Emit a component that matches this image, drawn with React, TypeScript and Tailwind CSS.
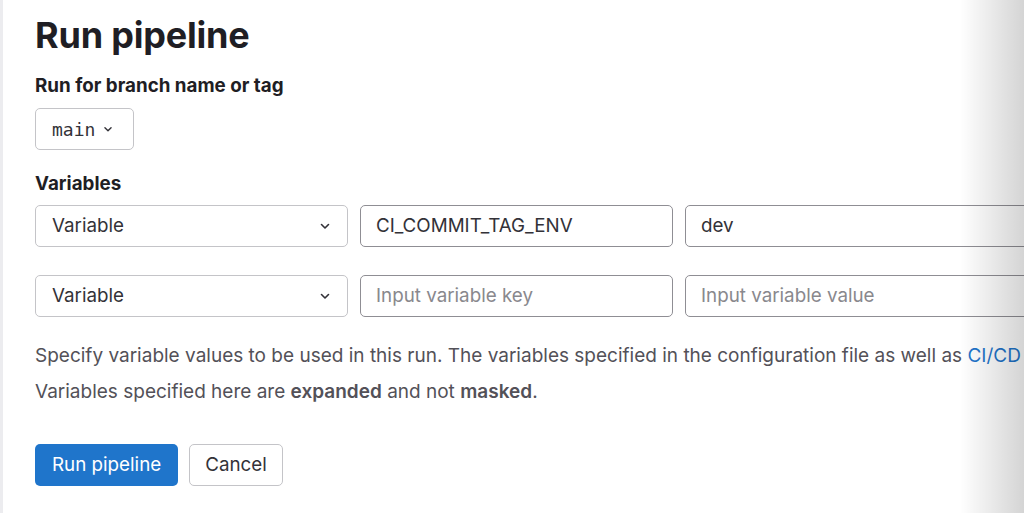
import React from "react";

function Chevron({ className = "" }: { className?: string }) {
  return (
    <svg viewBox="0 0 16 16" className={className} fill="none">
      <path d="M4.5 6.5 8 10l3.5-3.5" stroke="currentColor" strokeWidth="1.6" strokeLinecap="round" strokeLinejoin="round" />
    </svg>
  );
}

function VarRow({ keyText, valueText }: { keyText?: string; valueText?: string }) {
  return (
    <div className="flex gap-[12px]">
      <div className="w-[313px] h-[42px] shrink-0 rounded-[5px] border border-[#c4c4c8] flex items-center justify-between pl-[16px] pr-[14px] text-[18.8px] text-[#333238]">
        <span>Variable</span>
        <Chevron className="w-[16px] h-[16px] text-[#333238]" />
      </div>
      <div className="w-[313px] h-[42px] shrink-0 rounded-[5px] border border-[#8f8e94] flex items-center px-[15px] text-[18.8px]">
        {keyText ? <span className="text-[#333238]">{keyText}</span> : <span className="text-[#89888d]">Input variable key</span>}
      </div>
      <div className="w-[420px] h-[42px] shrink-0 rounded-[5px] border border-[#8f8e94] flex items-center px-[15px] text-[18.8px]">
        {valueText ? <span className="text-[#333238]">{valueText}</span> : <span className="text-[#89888d]">Input variable value</span>}
      </div>
    </div>
  );
}

export default function App() {
  return (
    <div className="relative w-[1024px] h-[513px] overflow-hidden bg-white font-['Inter',sans-serif]">
      <div className="absolute left-0 top-0 bottom-0 w-[3px] bg-[#ececef]" />
      <div className="pl-[35px] pt-[13px] w-[1300px]">
        <h1 className="text-[36px] leading-[45px] font-bold text-[#1f1e24] tracking-[-0.2px]">Run pipeline</h1>
        <div className="mt-[16px] text-[18.8px] leading-[24px] font-bold text-[#1f1e24]">Run for branch name or tag</div>
        <div className="mt-[10px] w-[99px] h-[42px] rounded-[5px] border border-[#c4c4c8] flex items-center pl-[16px] gap-[6px] text-[#333238]">
          <span className="font-['DejaVu_Sans_Mono',monospace] text-[18px]">main</span>
          <Chevron className="w-[14px] h-[14px]" />
        </div>
        <div className="mt-[22px] text-[18.8px] leading-[24px] font-bold text-[#1f1e24]">Variables</div>
        <div className="mt-[9px] flex flex-col gap-[28px]">
          <VarRow keyText="CI_COMMIT_TAG_ENV" valueText="dev" />
          <VarRow />
        </div>
        <div className="mt-[21px] text-[19px] leading-[36px] text-[#535158]">
          <p className="whitespace-nowrap">
            Specify variable values to be used in this run. The variables specified in the configuration file as well as{" "}
            <span className="text-[#1f75cb]">CI/CD settings</span> are used by default.
          </p>
          <p>
            Variables specified here are <span className="font-semibold">expanded</span> and not <span className="font-semibold">masked</span>.
          </p>
        </div>
        <div className="mt-[34px] flex gap-[11px]">
          <button className="h-[42px] px-[17px] rounded-[5px] bg-[#1f75cb] text-white text-[18.8px]">Run pipeline</button>
          <button className="h-[42px] px-[15px] rounded-[5px] border border-[#c4c4c8] bg-white text-[#333238] text-[18.8px]">Cancel</button>
        </div>
      </div>
      <div className="absolute right-0 top-0 bottom-0 w-[64px] bg-gradient-to-r from-[rgba(0,0,0,0)] to-[rgba(0,0,0,0.17)] pointer-events-none" />
    </div>
  );
}
